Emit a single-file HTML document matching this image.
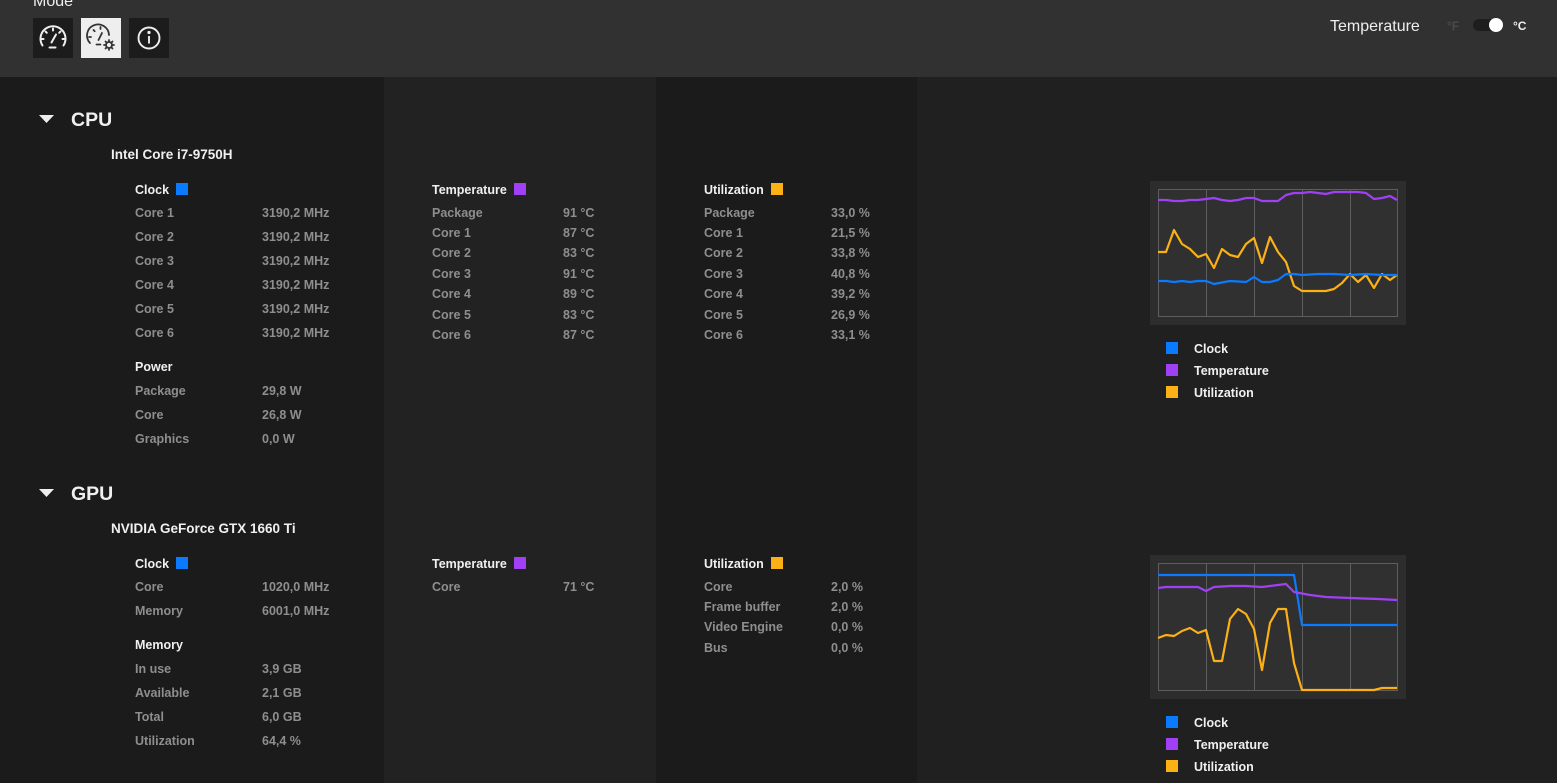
<!DOCTYPE html>
<html><head><meta charset="utf-8"><style>
*{margin:0;padding:0;box-sizing:border-box}
body{width:1557px;height:783px;overflow:hidden;background:#1b1b1b;font-family:"Liberation Sans",sans-serif;position:relative}
.t{position:absolute;white-space:nowrap;font-size:12.5px;font-weight:bold;line-height:14px;margin-top:1px}
.h{color:#f0f0f0}
.l{color:#8e8e8e}
.sq{display:inline-block;width:12px;height:12px;vertical-align:-1px;margin-left:7px}
.b{background:#0a7aff}.p{background:#a040f5}.y{background:#fbb015}
.bg{position:absolute;top:77px;bottom:0}
.btn{position:absolute;top:18px;width:40px;height:40px;background:#1c1c1c}
</style></head><body>
<div class="bg" style="left:0;width:384px;background:#1b1b1b"></div>
<div class="bg" style="left:384px;width:272px;background:#222"></div>
<div class="bg" style="left:656px;width:261px;background:#1b1b1b"></div>
<div class="bg" style="left:917px;width:640px;background:#202020"></div>
<div style="position:absolute;left:0;top:0;width:1557px;height:77px;background:#313131"></div>
<div class="t" style="left:33px;top:-8px;font-size:16px;font-weight:normal;color:#eee;line-height:18px">Mode</div>
<div class="btn" style="left:33px"><svg width="40" height="40" viewBox="0 0 40 40" fill="none" stroke="#eee" stroke-width="2" stroke-linecap="round"><path d="M9.5 27.5a12.5 12.5 0 1 1 21 0"/><path d="M20 10.5v2M12.5 13.5l1.3 1.3M27.5 13.5l-1.3 1.3M8.5 21h2M31.5 21h-2"/><path d="M18.5 24.5l4.5-8"/><path d="M16.5 29.5h6"/></svg></div>
<div class="btn" style="left:81px;background:#eee"><svg width="40" height="40" viewBox="0 0 40 40" fill="none" stroke="#333" stroke-width="1.8" stroke-linecap="round"><path d="M9 25a11 11 0 1 1 19-8"/><path d="M19.5 9v2M12.5 12l1.2 1.2M8 19h2"/><path d="M17.5 22l3.5-7"/><path d="M15.5 26.5h4"/><circle cx="28" cy="27" r="3"/><path d="M28 22v1.5M28 30.5v1.5M23 27h1.5M31.5 27h1.5M24.5 23.5l1 1M30.5 29.5l1 1M31.5 23.5l-1 1M25.5 29.5l-1 1"/></svg></div>
<div class="btn" style="left:129px"><svg width="40" height="40" viewBox="0 0 40 40" fill="none" stroke="#eee" stroke-width="1.9"><circle cx="20" cy="20" r="10.5"/><path d="M20 18v7.5"/><circle cx="20" cy="14.5" r="0.7" fill="#eee"/></svg></div>
<div class="t" style="left:1330px;top:17px;font-size:16px;font-weight:normal;color:#eee;line-height:18px">Temperature</div>
<div class="t" style="left:1447px;top:18px;font-size:12px;color:#4a4a4a">°F</div>
<div style="position:absolute;left:1473px;top:19px;width:30px;height:12px;border-radius:6px;background:#1e1e1e"></div>
<div style="position:absolute;left:1489px;top:18px;width:14px;height:14px;border-radius:7px;background:#fff"></div>
<div class="t" style="left:1513px;top:18px;font-size:12px;color:#eee">°C</div>

<!-- CPU -->
<svg style="position:absolute;left:39px;top:115px" width="15" height="8"><path d="M0 0H15L7.5 8Z" fill="#eee"/></svg>
<div class="t h" style="left:71px;top:108px;font-size:19.5px;line-height:22px">CPU</div>
<div class="t h" style="left:111px;top:147px;font-size:13.5px">Intel Core i7-9750H</div>
<div class="t h" style="left:135px;top:182px">Clock<span class="sq b"></span></div>
<div class="t l" style="left:135px;top:205px">Core 1</div><div class="t l" style="left:262px;top:205px">3190,2 MHz</div>
<div class="t l" style="left:135px;top:229px">Core 2</div><div class="t l" style="left:262px;top:229px">3190,2 MHz</div>
<div class="t l" style="left:135px;top:253px">Core 3</div><div class="t l" style="left:262px;top:253px">3190,2 MHz</div>
<div class="t l" style="left:135px;top:277px">Core 4</div><div class="t l" style="left:262px;top:277px">3190,2 MHz</div>
<div class="t l" style="left:135px;top:301px">Core 5</div><div class="t l" style="left:262px;top:301px">3190,2 MHz</div>
<div class="t l" style="left:135px;top:325px">Core 6</div><div class="t l" style="left:262px;top:325px">3190,2 MHz</div>
<div class="t h" style="left:135px;top:359px">Power</div>
<div class="t l" style="left:135px;top:383px">Package</div><div class="t l" style="left:262px;top:383px">29,8 W</div>
<div class="t l" style="left:135px;top:407px">Core</div><div class="t l" style="left:262px;top:407px">26,8 W</div>
<div class="t l" style="left:135px;top:431px">Graphics</div><div class="t l" style="left:262px;top:431px">0,0 W</div>

<div class="t h" style="left:432px;top:182px">Temperature<span class="sq p"></span></div>
<div class="t l" style="left:432px;top:205px">Package</div><div class="t l" style="left:563px;top:205px">91 °C</div>
<div class="t l" style="left:432px;top:225px">Core 1</div><div class="t l" style="left:563px;top:225px">87 °C</div>
<div class="t l" style="left:432px;top:245px">Core 2</div><div class="t l" style="left:563px;top:245px">83 °C</div>
<div class="t l" style="left:432px;top:266px">Core 3</div><div class="t l" style="left:563px;top:266px">91 °C</div>
<div class="t l" style="left:432px;top:286px">Core 4</div><div class="t l" style="left:563px;top:286px">89 °C</div>
<div class="t l" style="left:432px;top:307px">Core 5</div><div class="t l" style="left:563px;top:307px">83 °C</div>
<div class="t l" style="left:432px;top:327px">Core 6</div><div class="t l" style="left:563px;top:327px">87 °C</div>

<div class="t h" style="left:704px;top:182px">Utilization<span class="sq y"></span></div>
<div class="t l" style="left:704px;top:205px">Package</div><div class="t l" style="left:831px;top:205px">33,0 %</div>
<div class="t l" style="left:704px;top:225px">Core 1</div><div class="t l" style="left:831px;top:225px">21,5 %</div>
<div class="t l" style="left:704px;top:245px">Core 2</div><div class="t l" style="left:831px;top:245px">33,8 %</div>
<div class="t l" style="left:704px;top:266px">Core 3</div><div class="t l" style="left:831px;top:266px">40,8 %</div>
<div class="t l" style="left:704px;top:286px">Core 4</div><div class="t l" style="left:831px;top:286px">39,2 %</div>
<div class="t l" style="left:704px;top:307px">Core 5</div><div class="t l" style="left:831px;top:307px">26,9 %</div>
<div class="t l" style="left:704px;top:327px">Core 6</div><div class="t l" style="left:831px;top:327px">33,1 %</div>

<svg style="position:absolute;left:0;top:0" width="1557" height="783" fill="none" stroke-width="2.2" stroke-linejoin="round">
<rect x="1150" y="181" width="256" height="144" fill="#2d2d2d" stroke="none"/>
<rect x="1158.5" y="189.5" width="239" height="127" fill="#303030" stroke="#5e5e5e" stroke-width="1"/>
<path d="M1206.5 190v126M1254.5 190v126M1302.5 190v126M1350.5 190v126" stroke="#5e5e5e" stroke-width="1"/>
<polyline stroke="#a040f5" points="1158,200 1166,200 1174,201 1182,201 1190,200 1198,200 1206,199 1214,198 1222,200 1230,201 1238,200 1246,198 1254,198 1262,201 1278,201 1286,195 1294,193 1302,193 1310,192 1326,194 1334,192 1358,192 1366,193 1374,199 1382,198 1390,196 1397,200"/>
<polyline stroke="#fbb015" points="1158,252 1166,252 1174,230 1182,244 1190,249 1198,257 1206,254 1214,268 1222,249 1230,255 1238,257 1246,244 1254,238 1262,263 1270,237 1278,252 1286,262 1294,286 1302,291 1326,291 1334,289 1342,283 1350,274 1358,282 1366,275 1374,288 1382,274 1390,280 1397,275"/>
<polyline stroke="#0a7aff" points="1158,281 1166,281 1174,282 1182,281 1190,282 1198,281 1206,281 1214,284 1230,281 1246,282 1254,277 1262,282 1270,282 1278,280 1286,274 1294,274 1302,275 1318,274 1334,274 1350,275 1366,274 1382,275 1397,275"/>
<rect x="1150" y="555" width="256" height="144" fill="#2d2d2d" stroke="none"/>
<rect x="1158.5" y="563.5" width="239" height="127" fill="#303030" stroke="#5e5e5e" stroke-width="1"/>
<path d="M1206.5 564v126M1254.5 564v126M1302.5 564v126M1350.5 564v126" stroke="#5e5e5e" stroke-width="1"/>
<polyline stroke="#0a7aff" points="1158,575 1286,575 1294,575 1302,625 1397,625"/>
<polyline stroke="#a040f5" points="1158,588 1166,587 1198,587 1206,591 1214,587 1230,586 1246,586 1262,587 1286,584 1294,592 1310,595 1326,597 1350,598 1378,599 1397,600"/>
<polyline stroke="#fbb015" points="1158,638 1166,635 1174,636 1182,631 1190,628 1198,633 1206,630 1214,661 1222,661 1230,619 1238,609 1246,614 1254,629 1262,670 1270,623 1278,609 1286,609 1294,663 1302,690 1374,690 1382,688 1397,688"/>
</svg>
<div style="position:absolute;left:1166px;top:342px;width:12px;height:12px" class="b"></div>
<div style="position:absolute;left:1166px;top:364px;width:12px;height:12px" class="p"></div>
<div style="position:absolute;left:1166px;top:386px;width:12px;height:12px" class="y"></div>
<div class="t h" style="left:1194px;top:341px">Clock</div>
<div class="t h" style="left:1194px;top:363px">Temperature</div>
<div class="t h" style="left:1194px;top:385px">Utilization</div>

<!-- GPU -->
<svg style="position:absolute;left:39px;top:489px" width="15" height="8"><path d="M0 0H15L7.5 8Z" fill="#eee"/></svg>
<div class="t h" style="left:71px;top:482px;font-size:19.5px;line-height:22px">GPU</div>
<div class="t h" style="left:111px;top:521px;font-size:13.5px">NVIDIA GeForce GTX 1660 Ti</div>
<div class="t h" style="left:135px;top:556px">Clock<span class="sq b"></span></div>
<div class="t l" style="left:135px;top:579px">Core</div><div class="t l" style="left:262px;top:579px">1020,0 MHz</div>
<div class="t l" style="left:135px;top:603px">Memory</div><div class="t l" style="left:262px;top:603px">6001,0 MHz</div>
<div class="t h" style="left:135px;top:637px">Memory</div>
<div class="t l" style="left:135px;top:661px">In use</div><div class="t l" style="left:262px;top:661px">3,9 GB</div>
<div class="t l" style="left:135px;top:685px">Available</div><div class="t l" style="left:262px;top:685px">2,1 GB</div>
<div class="t l" style="left:135px;top:709px">Total</div><div class="t l" style="left:262px;top:709px">6,0 GB</div>
<div class="t l" style="left:135px;top:733px">Utilization</div><div class="t l" style="left:262px;top:733px">64,4 %</div>

<div class="t h" style="left:432px;top:556px">Temperature<span class="sq p"></span></div>
<div class="t l" style="left:432px;top:579px">Core</div><div class="t l" style="left:563px;top:579px">71 °C</div>

<div class="t h" style="left:704px;top:556px">Utilization<span class="sq y"></span></div>
<div class="t l" style="left:704px;top:579px">Core</div><div class="t l" style="left:831px;top:579px">2,0 %</div>
<div class="t l" style="left:704px;top:599px">Frame buffer</div><div class="t l" style="left:831px;top:599px">2,0 %</div>
<div class="t l" style="left:704px;top:619px">Video Engine</div><div class="t l" style="left:831px;top:619px">0,0 %</div>
<div class="t l" style="left:704px;top:640px">Bus</div><div class="t l" style="left:831px;top:640px">0,0 %</div>

<div style="position:absolute;left:1166px;top:716px;width:12px;height:12px" class="b"></div>
<div style="position:absolute;left:1166px;top:738px;width:12px;height:12px" class="p"></div>
<div style="position:absolute;left:1166px;top:760px;width:12px;height:12px" class="y"></div>
<div class="t h" style="left:1194px;top:715px">Clock</div>
<div class="t h" style="left:1194px;top:737px">Temperature</div>
<div class="t h" style="left:1194px;top:759px">Utilization</div>
</body></html>
